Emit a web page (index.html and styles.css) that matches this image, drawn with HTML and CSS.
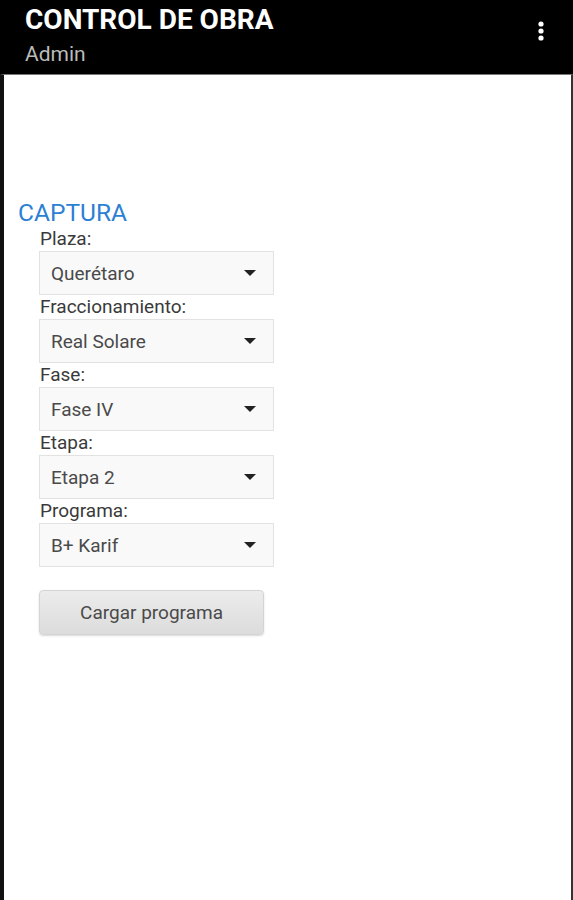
FILE: index.html
```html
<!DOCTYPE html>
<html lang="es">
<head>
    <meta charset="UTF-8">
    <meta name="viewport" content="width=device-width, initial-scale=1.0">
    <title>Control de Obra</title>
    <link rel="stylesheet" href="styles.css">
</head>
<body>
    <div class="header">
        <div class="titles">
            <h1>CONTROL DE OBRA</h1>
            <div class="user">Admin</div>
        </div>
        <div class="menu">
            <svg width="8" height="22" viewBox="0 0 8 22">
                <circle cx="4" cy="4" r="2.6" fill="#fff"/>
                <circle cx="4" cy="11" r="2.6" fill="#fff"/>
                <circle cx="4" cy="18" r="2.6" fill="#fff"/>
            </svg>
        </div>
    </div>
    <div class="content">
        <h2>CAPTURA</h2>
        <div class="form">
            <label>Plaza:</label>
            <div class="select"><span>Querétaro</span><i class="caret"></i></div>
            <label>Fraccionamiento:</label>
            <div class="select"><span>Real Solare</span><i class="caret"></i></div>
            <label>Fase:</label>
            <div class="select"><span>Fase IV</span><i class="caret"></i></div>
            <label>Etapa:</label>
            <div class="select"><span>Etapa 2</span><i class="caret"></i></div>
            <label>Programa:</label>
            <div class="select"><span>B+ Karif</span><i class="caret"></i></div>
            <button class="btn">Cargar programa</button>
        </div>
    </div>
</body>
</html>
```

FILE: styles.css
```css
html, body {
    height: 100%;
}
body {
    margin: 0;
    font-family: Roboto, 'Liberation Sans', sans-serif;
    background: #000;
    display: flex;
    flex-direction: column;
}
.header {
    height: 74px;
    background: #000;
    display: flex;
    justify-content: space-between;
    padding: 0 28px 0 25px;
}
.titles {
    padding-top: 3px;
}
h1 {
    margin: 0;
    color: #fff;
    font-size: 28px;
    font-weight: bold;
    line-height: 34px;
}
.user {
    color: #bbb;
    font-size: 21px;
    line-height: 34px;
}
.menu {
    padding-top: 20px;
}
.content {
    flex: 1;
    background: #fff;
    border-left: 4px solid #111;
    border-right: 2px solid #333;
    border-top: 1px solid #777;
    padding: 124px 0 0 14px;
}
h2 {
    margin: 0;
    color: #2b7fd4;
    font-size: 24.5px;
    font-weight: normal;
    line-height: 28px;
}
.form {
    padding-left: 21px;
    display: flex;
    flex-direction: column;
    align-items: flex-start;
}
label {
    font-size: 19px;
    color: #3a3a3a;
    line-height: 24px;
    padding-left: 1px;
}
.select {
    box-sizing: border-box;
    width: 235px;
    height: 44px;
    background: #f9f9f9;
    border: 1px solid #e2e2e2;
    display: flex;
    align-items: center;
    justify-content: space-between;
    padding: 0 17px 0 11px;
    font-size: 19px;
    color: #4a4a4a;
}
.caret {
    width: 0;
    height: 0;
    border-left: 6px solid transparent;
    border-right: 6px solid transparent;
    border-top: 6px solid #222;
}
.btn {
    margin-top: 23px;
    width: 225px;
    height: 45px;
    border: 1px solid #d4d4d4;
    border-radius: 4px;
    background: linear-gradient(#ececec, #dcdcdc);
    box-shadow: 0 1px 2px rgba(0, 0, 0, 0.15);
    font-family: Roboto, 'Liberation Sans', sans-serif;
    font-size: 19px;
    color: #4a4a4a;
}
```
